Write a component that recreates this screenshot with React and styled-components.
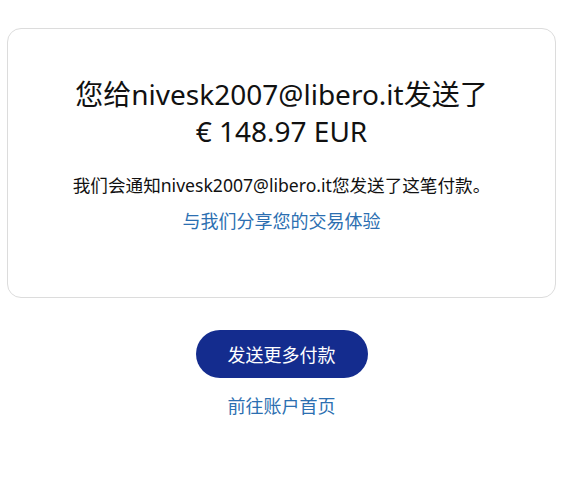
import styled, { createGlobalStyle } from "styled-components";

const GlobalStyle = createGlobalStyle`
  body {
    margin: 0;
    background: #ffffff;
    font-family: "Noto Sans", "Noto Sans CJK SC", sans-serif;
    color: #000000;
  }
`;

const Page = styled.div`
  width: 561px;
  padding: 28px 5px 0 7px;
  box-sizing: border-box;
  display: flex;
  flex-direction: column;
  align-items: center;
`;

const Card = styled.div`
  width: 100%;
  height: 270px;
  box-sizing: border-box;
  border: 1px solid #dcdcdc;
  border-radius: 14px;
  display: flex;
  flex-direction: column;
  align-items: center;
  padding-top: 47px;
`;

const Title = styled.h1`
  margin: 0;
  font-size: 28px;
  font-weight: 400;
  line-height: 37px;
  text-align: center;
  color: #111111;
`;

const Message = styled.p`
  margin: 23px 0 0;
  font-size: 17.6px;
  line-height: 24px;
  color: #111111;
`;

const Link = styled.a`
  display: block;
  margin-top: ${({ $gap }) => $gap}px;
  font-size: 18px;
  line-height: 24px;
  color: #2c6fb1;
  text-decoration: none;
  cursor: pointer;
`;

const Actions = styled.div`
  margin-top: 32px;
  display: flex;
  flex-direction: column;
  align-items: center;
`;

const Button = styled.button`
  width: 172px;
  height: 48px;
  border: none;
  border-radius: 24px;
  background: #142c8e;
  color: #ffffff;
  font-family: inherit;
  font-size: 18px;
  cursor: pointer;
`;

export default function App() {
  return (
    <>
      <GlobalStyle />
      <Page>
        <Card>
          <Title>
            您给nivesk2007@libero.it发送了
            <br />€ 148.97 EUR
          </Title>
          <Message>我们会通知nivesk2007@libero.it您发送了这笔付款。</Message>
          <Link $gap={12}>与我们分享您的交易体验</Link>
        </Card>
        <Actions>
          <Button>发送更多付款</Button>
          <Link $gap={16}>前往账户首页</Link>
        </Actions>
      </Page>
    </>
  );
}
